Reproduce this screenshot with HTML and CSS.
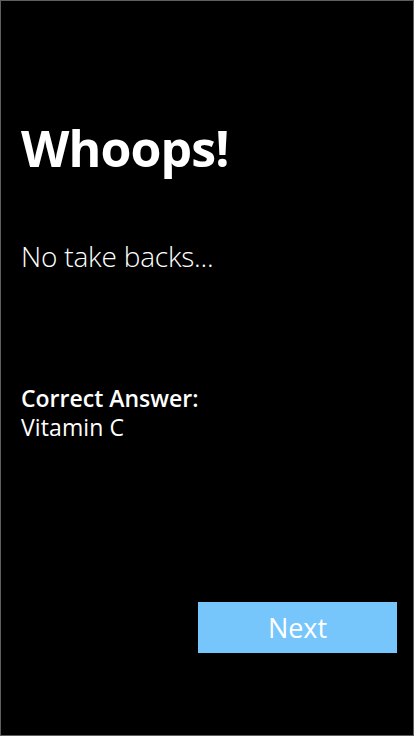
FILE: index.html
```html
<!DOCTYPE html>
<html>
<head>
<meta charset="utf-8">
<link rel="stylesheet" href="styles.css">
</head>
<body>
<div class="screen">
  <h1 class="title">Whoops!</h1>
  <p class="subtitle">No take backs...</p>
  <div class="answer">
    <div class="answer-label">Correct Answer:</div>
    <div class="answer-value">Vitamin C</div>
  </div>
  <div class="actions">
    <button class="next">Next</button>
  </div>
</div>
</body>
</html>
```
FILE: styles.css
```css
html, body {
  margin: 0;
  padding: 0;
  background: #000;
}
.screen {
  box-sizing: border-box;
  width: 414px;
  height: 736px;
  border: 1px solid #5f5f5f;
  background: #000;
  color: #fff;
  font-family: "Open Sans", "Noto Sans", sans-serif;
  padding: 0 16px 0 20px;
  display: flex;
  flex-direction: column;
}
.title {
  margin: 113px 0 0 0;
  font-size: 50px;
  font-weight: 700;
  line-height: 68px;
  letter-spacing: -0.9px;
}
.subtitle {
  margin: 56px 0 0 0;
  font-size: 28px;
  font-weight: 300;
  line-height: 36px;
  letter-spacing: -0.2px;
}
.answer {
  margin-top: 110px;
  font-size: 23px;
  line-height: 29px;
}
.answer-label {
  font-weight: 600;
  letter-spacing: 0;
}
.answer-value {
  font-weight: 400;
  letter-spacing: 0.1px;
}
.actions {
  margin-top: auto;
  margin-bottom: 82px;
  display: flex;
  justify-content: flex-end;
}
.next {
  width: 199px;
  height: 51px;
  border: none;
  background: #76c6fc;
  color: #fff;
  font-family: "Open Sans", "Noto Sans", sans-serif;
  font-size: 27px;
  font-weight: 400;
  padding: 0;
  line-height: 51px;
}
```
